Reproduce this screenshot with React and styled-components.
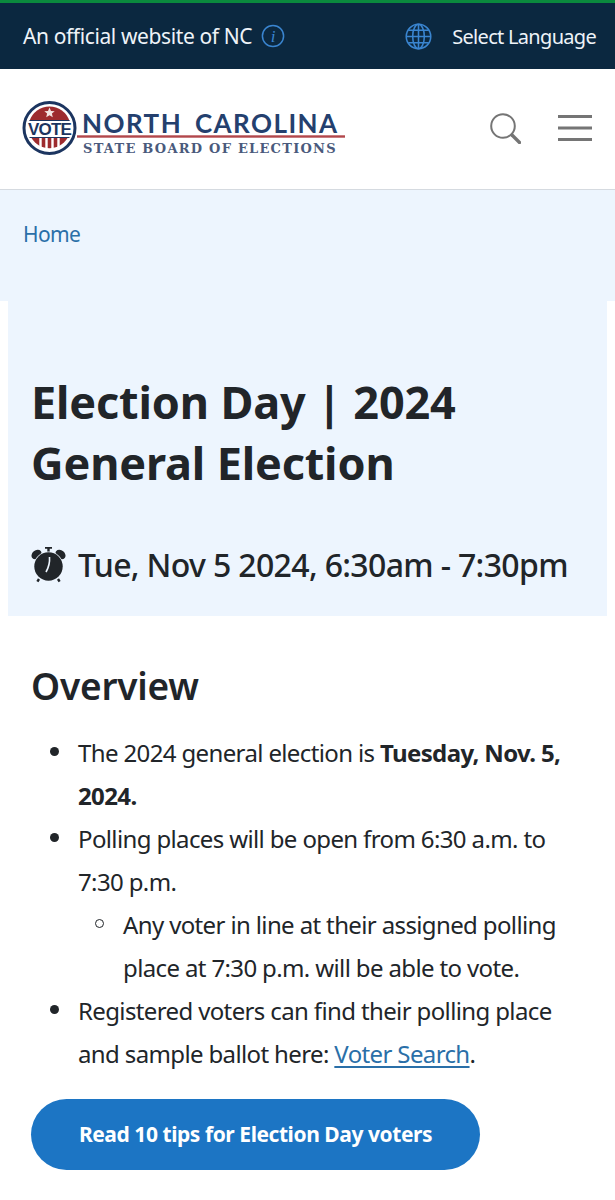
import React from "react";
import styled, { createGlobalStyle } from "styled-components";

const Global = createGlobalStyle`
  html, body { margin: 0; padding: 0; background: #fff; }
  body { font-family: "Noto Sans", "Open Sans", sans-serif; color: #212529; }
`;
const Page = styled.div`width: 615px; height: 1200px; overflow: hidden;`;
const TopBanner = styled.div`
  height: 66px; background: #0b2840; border-top: 3px solid #0b8a3e;
  display: flex; align-items: center; justify-content: space-between;
  padding: 0 19px 0 23px; color: #eef3f8;
`;
const BannerGroup = styled.div`
  display: flex; align-items: center; gap: ${p => p.$gap}px;
  font-size: ${p => p.$size}px; letter-spacing: ${p => p.$track}px;
`;
const Header = styled.header`
  height: 118px; border-bottom: 1px solid #d5dae0; display: flex; align-items: center;
  justify-content: space-between; padding: 0 23px 2px 22px;
`;
const Tools = styled.div`display: flex; align-items: center; gap: 37px;`;
const Breadcrumb = styled.nav`
  height: 111px; background: #edf5fe; padding: 30px 23px 0; box-sizing: border-box;
  font-size: 21px; letter-spacing: -0.6px;
`;
const Crumb = styled.a`color: #2a6fa8; text-decoration: none;`;
const Hero = styled.section`
  margin: 0 8px; height: 315px; background: #edf5fe; padding: 70px 23px 0; box-sizing: border-box;
`;
const Title = styled.h1`
  margin: 0; font-size: 45px; line-height: 61px; font-weight: 700; letter-spacing: -0.15px;
`;
const When = styled.div`
  margin-top: 52px; display: flex; align-items: center; gap: 11px;
  font-size: 32px; font-weight: 500; letter-spacing: -0.65px; line-height: 40px;
`;
const Content = styled.main`padding: 44px 32px 0 31px;`;
const Heading = styled.h2`
  margin: 0 0 19px; font-size: 37px; line-height: 52px; font-weight: 600; letter-spacing: -0.2px;
`;
const List = styled.ul`
  margin: 0; padding: 0 0 0 47px; font-size: 24px; line-height: 43px; letter-spacing: -0.63px;
  list-style: none;
  ul & { padding-left: 45px; }
`;
const Item = styled.li`
  position: relative;
  &::before {
    content: ""; position: absolute; box-sizing: border-box; border-radius: 50%;
    left: -28px; top: 16px; width: 9px; height: 9px;
    background: ${p => p.$circle ? "transparent" : "#212529"};
    border: ${p => p.$circle ? "1.5px solid #212529" : "none"};
  }
`;
const Link = styled.a`color: #2a6fa8; text-decoration: underline; text-underline-offset: 3px;`;
const Cta = styled.a`
  margin-top: 24px; width: 449px; height: 71px; border-radius: 36px; background: #1c75c4; color: #fff;
  display: flex; align-items: center; justify-content: center; padding-bottom: 2px; box-sizing: border-box;
  font-size: 21px; font-weight: 700; letter-spacing: -0.44px;
`;

const Logo = () => (
  <svg width="326" height="60" viewBox="0 0 326 60">
    <circle cx="27.5" cy="30" r="25.5" fill="#fff" stroke="#1c3560" strokeWidth="3" />
    <path d="M7.5 23 A21 21 0 0 1 47.5 23 Z" fill="#9d2b2e" />
    <path d="M27.5 9.5l1.5 3.4 3.7.3-2.8 2.4.9 3.6-3.3-1.9-3.3 1.9.9-3.6-2.8-2.4 3.7-.3z" fill="#f3e4e2" />
    <path d="M9.5 40 H45.5 A21 21 0 0 1 9.5 40 Z" fill="#9d2b2e" />
    <path d="M18.5 40v11M24.5 40v13M30.5 40v13M36.5 40v11" stroke="#fff" strokeWidth="2.4" />
    <path d="M7.5 22.5h40M7.5 39.5h40" stroke="#1c3560" strokeWidth="1.2" />
    <text x="27.5" y="36.5" textAnchor="middle" fontFamily="Liberation Sans, sans-serif" fontWeight="700" fontSize="17" letterSpacing="-0.8" fill="#1c3560">VOTE</text>
    <rect x="55" y="37.3" width="268" height="2.4" fill="#b2474b" />
    <text x="60" y="35" fontFamily="Lato, sans-serif" fontWeight="700" fontSize="26" letterSpacing="1.45" wordSpacing="5" fill="#24406e">NORTH CAROLINA</text>
    <text x="61" y="54.5" fontFamily="DejaVu Serif, serif" fontWeight="700" fontSize="13" letterSpacing="1.25" fill="#4a5a7c">STATE BOARD OF ELECTIONS</text>
  </svg>
);

const InfoIcon = () => (
  <svg width="24" height="24" viewBox="0 0 24 24" fill="none">
    <circle cx="12" cy="12" r="10.6" stroke="#3a85d0" strokeWidth="1.5" />
    <text x="12" y="18" textAnchor="middle" fontFamily="Liberation Serif, serif" fontStyle="italic" fontSize="17" fill="#3a85d0">i</text>
  </svg>
);
const GlobeIcon = () => (
  <svg width="27" height="27" viewBox="0 0 26 26" fill="none" stroke="#3a85d0" strokeWidth="1.5">
    <circle cx="13" cy="13" r="11.8" />
    <ellipse cx="13" cy="13" rx="5.6" ry="11.8" />
    <path d="M13 1.2v23.6M1.2 13h23.6M3.2 7h19.6M3.2 19h19.6" />
  </svg>
);
const SearchIcon = () => (
  <svg width="31" height="31" viewBox="0 0 31 31" fill="none" stroke="#757575">
    <circle cx="13" cy="13" r="11.8" strokeWidth="2" />
    <path d="M22 22l7.5 7.5" strokeWidth="3.4" strokeLinecap="round" />
  </svg>
);
const MenuIcon = () => (
  <svg width="34" height="26" viewBox="0 0 34 26" fill="none" stroke="#757575" strokeWidth="2.8">
    <path d="M0 1.5h34M0 13h34M0 24.5h34" />
  </svg>
);
const ClockIcon = () => (
  <svg width="36" height="36" viewBox="0 0 36 36">
    <ellipse cx="5.5" cy="7.5" rx="5.5" ry="4.2" transform="rotate(-40 5.5 7.5)" fill="#212529" />
    <ellipse cx="29.5" cy="7.5" rx="5.5" ry="4.2" transform="rotate(40 29.5 7.5)" fill="#212529" />
    <path d="M14 0h7v1.8h-2.3V6h-2.4V1.8H14z" fill="#212529" />
    <circle cx="17.5" cy="19.5" r="15" fill="#edf5fe" />
    <circle cx="17.5" cy="19.5" r="14.2" fill="#212529" />
    <path d="M8 32l-1.6 2.6M27 32l1.6 2.6" stroke="#212529" strokeWidth="2.4" />
    <path d="M18.5 10c.4 5-.6 10-3.5 15" stroke="#edf5fe" strokeWidth="1.6" fill="none" />
  </svg>
);

export default function App() {
  return (
    <Page>
      <Global />
      <TopBanner>
        <BannerGroup $gap={9} $size={21} $track={-0.39}>An official website of NC <InfoIcon /></BannerGroup>
        <BannerGroup $gap={20} $size={20} $track={-0.7}><GlobeIcon /> Select Language</BannerGroup>
      </TopBanner>
      <Header>
        <Logo />
        <Tools><SearchIcon /><MenuIcon /></Tools>
      </Header>
      <Breadcrumb><Crumb>Home</Crumb></Breadcrumb>
      <Hero>
        <Title>Election Day | 2024 General Election</Title>
        <When><ClockIcon /> Tue, Nov 5 2024, 6:30am - 7:30pm</When>
      </Hero>
      <Content>
        <Heading>Overview</Heading>
        <List>
          <Item>The 2024 general election is <b>Tuesday, Nov. 5, 2024.</b></Item>
          <Item>Polling places will be open from 6:30 a.m. to 7:30 p.m.
            <List>
              <Item $circle>Any voter in line at their assigned polling place at 7:30 p.m. will be able to vote.</Item>
            </List>
          </Item>
          <Item>Registered voters can find their polling place and sample ballot here: <Link>Voter Search</Link>.</Item>
        </List>
        <Cta>Read 10 tips for Election Day voters</Cta>
      </Content>
    </Page>
  );
}
